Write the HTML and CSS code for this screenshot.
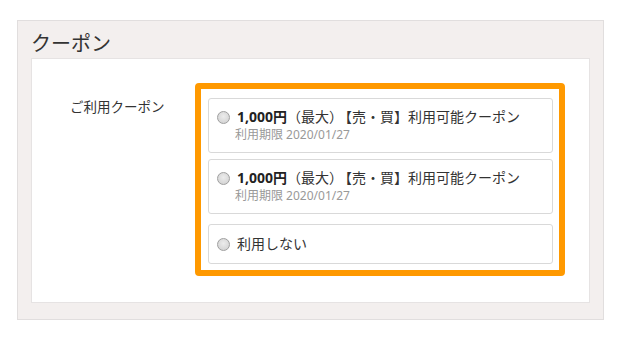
FILE: index.html
```html
<!DOCTYPE html>
<html lang="ja">
<head>
<meta charset="utf-8">
<link rel="stylesheet" href="styles.css">
</head>
<body>
<section class="coupon-box">
  <h2 class="coupon-title">クーポン</h2>
  <div class="coupon-panel">
    <div class="coupon-label">ご利用クーポン</div>
    <div class="coupon-highlight">
      <label class="coupon-card">
        <span class="radio"></span>
        <span class="coupon-text">
          <span class="coupon-main"><b>1,000円</b>（最大）<span class="tag">【売・買】</span>利用可能クーポン</span>
          <span class="coupon-sub">利用期限 2020/01/27</span>
        </span>
      </label>
      <label class="coupon-card">
        <span class="radio"></span>
        <span class="coupon-text">
          <span class="coupon-main"><b>1,000円</b>（最大）<span class="tag">【売・買】</span>利用可能クーポン</span>
          <span class="coupon-sub">利用期限 2020/01/27</span>
        </span>
      </label>
      <label class="coupon-card coupon-card-none">
        <span class="radio"></span>
        <span class="coupon-text">
          <span class="coupon-main">利用しない</span>
        </span>
      </label>
    </div>
  </div>
</section>
</body>
</html>
```
FILE: styles.css
```css
html, body {
  margin: 0;
  padding: 0;
  background: #fff;
}
body {
  font-family: "Noto Sans", "Noto Sans CJK JP", sans-serif;
  color: #333;
  padding-top: 20px;
  padding-left: 17px;
}
.coupon-box {
  height: 298px;
  background: #f3efee;
  border: 1px solid #e1dede;
  padding: 0 13px 0 13px;
  box-sizing: content-box;
  width: 559px;
  display: flex;
  flex-direction: column;
}
.coupon-title {
  margin: 0;
  font-weight: normal;
  font-size: 20px;
  line-height: 24px;
  height: 37px;
  padding-top: 11px;
  box-sizing: border-box;
  color: #333;
}
.coupon-panel {
  background: #fff;
  border: 1px solid #e6e3e3;
  padding: 24px 24px 25px 38px;
  display: flex;
  align-items: flex-start;
  height: 245px;
  box-sizing: border-box;
}
.coupon-label {
  width: 125px;
  font-size: 13.5px;
  line-height: 18px;
  padding-top: 15px;
  color: #333;
}
.coupon-highlight {
  width: 370px;
  box-sizing: border-box;
  border: 6px solid #ff9900;
  border-radius: 4px;
  padding: 9px 6px 6px 7px;
  display: flex;
  flex-direction: column;
}
.coupon-card {
  display: flex;
  align-items: flex-start;
  border: 1px solid #d9d9d9;
  border-radius: 3px;
  padding: 8px 8px 9px 8px;
  margin-bottom: 6px;
  background: #fff;
}
.coupon-card-none {
  margin-top: 4px;
  margin-bottom: 0;
  padding: 9px 8px 9px 8px;
}
.radio {
  flex: none;
  width: 13px;
  height: 13px;
  box-sizing: border-box;
  border: 1px solid #9f9f9f;
  border-radius: 50%;
  background: radial-gradient(circle at 50% 40%, #ececec 0%, #dadada 60%, #cfcfcf 100%);
  margin-top: 4px;
  margin-right: 7px;
}
.coupon-text {
  display: flex;
  flex-direction: column;
}
.coupon-main {
  font-size: 14px;
  line-height: 20px;
  color: #333;
  white-space: nowrap;
}
.coupon-main b {
  font-weight: bold;
  color: #222;
}
.tag {
  margin-left: 2px;
}
.coupon-sub {
  font-size: 12px;
  line-height: 16px;
  color: #999;
  margin-left: -2px;
}
```
